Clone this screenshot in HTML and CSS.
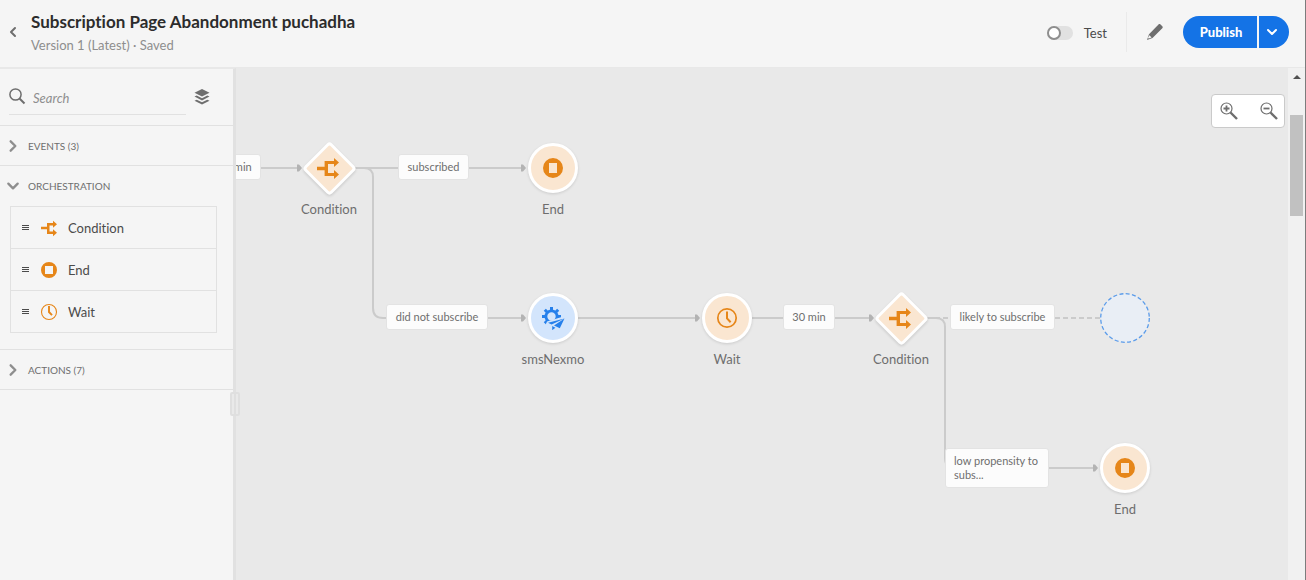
FILE: index.html
```html
<!DOCTYPE html>
<html lang="en">
<head>
<meta charset="utf-8">
<title>Subscription Page Abandonment puchadha</title>
<link rel="stylesheet" href="styles.css">
</head>
<body>
<svg class="defs" aria-hidden="true">
  <symbol id="i-condition" viewBox="-12 -12 24 24"><path d="M-12-1.300h7.600v-5.700h9.400v-3l5 4.500-5 4.500v-3h-6v9h6v-3l5 4.500-5 4.500v-3h-9.400v-5.700h-7.600z" fill="#e68619"/></symbol>
  <symbol id="i-end" viewBox="-12 -12 24 24"><path fill-rule="evenodd" d="M0-10a10 10 0 1 0 0 20a10 10 0 1 0 0-20zM-4-5h8V5h-8z" fill="#e68619"/></symbol>
  <symbol id="i-wait" viewBox="-12 -12 24 24"><circle r="9.200" fill="none" stroke="#e68619" stroke-width="1.700"/><path d="M-1-6.500h2V0l3.400 3.400-1.500 1.500L-1 .8z" fill="#e68619"/></symbol>
  <symbol id="i-chevron" viewBox="0 0 12 12"><path d="M4 2l4 4-4 4" fill="none" stroke="currentColor" stroke-width="2" stroke-linecap="round" stroke-linejoin="round"/></symbol>
</svg>
<header class="header">
  <button class="back" aria-label="Back"><svg width="12" height="12"><use href="#i-chevron"/></svg></button>
  <div class="heading">
    <h1>Subscription Page Abandonment puchadha</h1>
    <p>Version 1 (Latest) · Saved</p>
  </div>
  <label class="test"><input type="checkbox" class="switch"><span>Test</span></label>
  <button class="edit" aria-label="Edit"><svg width="18" height="18" viewBox="0 0 18 18"><path d="M12.500 1.400c.6-.6 1.400-.6 2 0l1.800 1.800c.6.6.6 1.400 0 2L6.500 15 1 17l2-5.800z" fill="#6e6e6e"/><path d="M3.400 12.300l2.200 2.200-2.900 1.100-.8-.7z" fill="#f5f5f5"/></svg></button>
  <div class="publish">
    <button class="publish-main">Publish</button>
    <button class="publish-more" aria-label="More publish options"><svg width="12" height="12"><use href="#i-chevron"/></svg></button>
  </div>
</header>
<main class="workspace">
  <aside class="sidebar">
    <div class="search-row">
      <label class="search">
        <svg width="18" height="18" viewBox="0 0 18 18" fill="none" stroke="#6e6e6e"><circle cx="6.500" cy="6.500" r="5.600" stroke-width="1.500"/><path d="M10.500 10.500l5 5" stroke-width="2"/></svg>
        <input type="text" placeholder="Search" aria-label="Search">
      </label>
      <button class="layers" aria-label="Filter layers"><svg width="16" height="18" viewBox="0 0 16 18" fill="#6e6e6e"><path d="M8 1l7.500 3.700L8 8.400.5 4.700z"/><path d="M.5 8.600l2.200-1L8 10.200l5.300-2.600 2.200 1L8 12.400z"/><path d="M.5 12.700l2.200-1L8 14.300l5.300-2.600 2.200 1L8 16.500z"/></svg></button>
    </div>
    <section class="group">
      <button class="group-title"><svg class="chev" width="14" height="14"><use href="#i-chevron"/></svg>EVENTS (3)</button>
    </section>
    <section class="group">
      <button class="group-title"><svg class="chev open" width="14" height="14"><use href="#i-chevron"/></svg>ORCHESTRATION</button>
      <ul class="palette">
        <li><svg class="grip" width="7" height="7" viewBox="0 0 7 7"><path d="M0 1.500h7M0 3.500h7M0 5.500h7" stroke="#4b4b4b"/></svg><svg width="18" height="20" viewBox="0 0 18 20"><path d="M1 8.800h6V5h6V2.700l4 3.500-4 3.500V7.500H9.500v6H13v-2.200l4 3.500-4 3.500V16H7v-4.800H1z" fill="#e68619"/></svg>Condition</li>
        <li><svg class="grip" width="7" height="7" viewBox="0 0 7 7"><path d="M0 1.500h7M0 3.500h7M0 5.500h7" stroke="#4b4b4b"/></svg><svg width="18" height="20" viewBox="0 0 18 20"><path fill-rule="evenodd" d="M9 2a8 8 0 1 0 0 16a8 8 0 1 0 0-16zM5 6h8v8H5z" fill="#e68619"/></svg>End</li>
        <li><svg class="grip" width="7" height="7" viewBox="0 0 7 7"><path d="M0 1.500h7M0 3.500h7M0 5.500h7" stroke="#4b4b4b"/></svg><svg width="18" height="20" viewBox="0 0 18 20" fill="none" stroke="#e68619"><circle cx="9" cy="10" r="7.500" stroke-width="1.100"/><path d="M9 4v6l3 3.200" stroke-width="1.900"/></svg>Wait</li>
      </ul>
    </section>
    <section class="group">
      <button class="group-title"><svg class="chev" width="14" height="14"><use href="#i-chevron"/></svg>ACTIONS (7)</button>
    </section>
    <div class="handle"></div>
  </aside>
  <div class="canvas">
    <svg class="edges" width="1052" height="512" fill="none" stroke="#cbcbcb" stroke-width="2">
      <path d="M0 100H62M119 100H288M119 100h9q9 0 9 9v131q0 10 10 10M147 250H288M342 250H462M516 250H636"/>
      <path d="M691 250H864" stroke-dasharray="5 3"/>
      <path d="M691 250h9q9 0 9 9v131q0 10 10 10M719 400H860"/>
      <g fill="#b3b3b3" stroke="none"><path d="M61 96.500h2l3 3.500-3 3.500h-2z"/><path d="M285 96.500h2l3 3.500-3 3.500h-2z"/><path d="M285 246.500h2l3 3.500-3 3.500h-2z"/><path d="M459 246.500h2l3 3.500-3 3.500h-2z"/><path d="M633 246.500h2l3 3.500-3 3.500h-2z"/><path d="M857 396.500h2l3 3.500-3 3.500h-2z"/></g>
    </svg>
    <span class="edge-label e-min">30 min</span>
    <span class="edge-label e-subscribed">subscribed</span>
    <span class="edge-label e-not">did not subscribe</span>
    <span class="edge-label e-30">30 min</span>
    <span class="edge-label e-likely">likely to subscribe</span>
    <span class="edge-label e-low">low propensity to subs...</span>
    <div class="node n-cond1"><i class="diamond"></i><svg width="24" height="24"><use href="#i-condition"/></svg><span>Condition</span></div>
    <div class="node n-end1"><i class="disc"></i><svg width="24" height="24"><use href="#i-end"/></svg><span>End</span></div>
    <div class="node n-sms"><i class="disc blue"></i><svg width="24" height="24" viewBox="-12 -12 24 24" fill="#2680eb"><g fill="none" stroke="#2680eb"><circle cx="-1.500" cy="-1.500" r="5.600" stroke-width="2.800"/><path d="M-1.500-11v3.500M-11-1.500h3.500M4.500-1.500h3.500M-8.200-8.200l2.500 2.500M5.200-8.200L2.700-5.700M-8.200 5.200l2.500-2.500" stroke-width="3"/></g><path d="M12-2L-6 3.500l-1 2.500 5 3v4h8l6-8z" fill="#d3e5fc"/><path d="M11.500.5L-5 4.800l3.600 1.800zM11.500.5L1 7.500l5.800 2.700zM-.8 8l3.200 1.700L-.8 12.200z"/></svg><span>smsNexmo</span></div>
    <div class="node n-wait"><i class="disc"></i><svg width="24" height="24"><use href="#i-wait"/></svg><span>Wait</span></div>
    <div class="node n-cond2"><i class="diamond"></i><svg width="24" height="24"><use href="#i-condition"/></svg><span>Condition</span></div>
    <div class="node n-empty"><svg class="drop" width="52" height="52" viewBox="-26 -26 52 52"><circle r="24.300" fill="#e9eef5" stroke="#5b9cea" stroke-width="1.300" stroke-dasharray="4 2.360"/></svg></div>
    <div class="node n-end2"><i class="disc"></i><svg width="24" height="24"><use href="#i-end"/></svg><span>End</span></div>
    <div class="zoom">
      <button aria-label="Zoom in"><svg width="18" height="18" viewBox="0 0 18 18" fill="none" stroke="#6e6e6e"><circle cx="6.500" cy="6.500" r="5.500" stroke-width="1.200"/><path d="M3.500 6.500h6M6.500 3.500v6" stroke-width="1.800"/><path d="M10.500 10.500l6.500 6.500" stroke-width="2.400"/></svg></button>
      <button aria-label="Zoom out"><svg width="18" height="18" viewBox="0 0 18 18" fill="none" stroke="#6e6e6e"><circle cx="6.500" cy="6.500" r="5.500" stroke-width="1.200"/><path d="M3.500 6.500h6" stroke-width="1.800"/><path d="M10.500 10.500l6.500 6.500" stroke-width="2.400"/></svg></button>
    </div>
  </div>
  <div class="scrollbar"><i class="arrow"></i><i class="thumb"></i></div>
</main>
</body>
</html>
```
FILE: styles.css
```css
*, *::before { box-sizing: border-box; }
body {
  margin: 0;
  height: 100vh;
  display: flex;
  flex-direction: column;
  overflow: hidden;
  border-right: 1px solid #7c7c7c;
  background: #f5f5f5;
  color: #4b4b4b;
  font: 13px/18px Lato, "Open Sans", sans-serif;
  font-variant-ligatures: none;
}
button { border: 0; padding: 0; background: none; font: inherit; color: inherit; display: flex; align-items: center; }
.defs { position: absolute; width: 0; height: 0; }
.header {
  flex: none;
  display: flex;
  align-items: center;
  height: 68px;
  padding-right: 16px;
  padding-bottom: 4px;
  border-bottom: 1px solid #e8e8e8;
}
.back { width: 31px; padding-left: 7px; color: #6e6e6e; }
.back svg { transform: rotate(180deg); }
.heading { flex: 1; }
h1 { margin: 0; padding-top: 2px; font-size: 17px; line-height: 24px; font-weight: 700; color: #2c2c2c; }
.heading p { margin: 0; padding-top: 1px; font-size: 13px; line-height: 20px; color: #8e8e8e; }
.test { display: flex; align-items: center; gap: 11px; height: 40px; padding: 2px 19px 0 0; border-right: 1px solid #eaeaea; }
.switch { appearance: none; margin: 0; width: 26px; height: 14px; border-radius: 7px; background: #e1e1e1; }
.switch::before { content: ""; display: block; width: 14px; height: 14px; border: 2px solid #8e8e8e; border-radius: 50%; background: #fff; }
.edit { padding: 0 19px; }
.publish { display: flex; gap: 2px; }
.publish button { height: 32px; background: #1473e6; color: #fff; justify-content: center; }
.publish .publish-main { width: 74px; padding-left: 2px; border-radius: 16px 0 0 16px; font-weight: 900; }
.publish .publish-more { width: 30px; padding-right: 4px; border-radius: 0 16px 16px 0; }
.publish-more svg { transform: rotate(90deg); }

.workspace { flex: 1; display: flex; min-height: 0; }
.sidebar { position: relative; flex: none; width: 236px; border-right: 3px solid #e1e1e1; border-top: 1px solid #e8e8e8; }
.search-row { display: flex; align-items: flex-start; height: 57px; padding: 10px 9px 0; border-bottom: 1px solid #e1e1e1; }
.search { display: flex; align-items: center; gap: 6px; width: 177px; height: 36px; border-bottom: 1px solid #e1e1e1; }
.search svg { flex: none; }
.search input { width: 100%; border: 0; padding: 2px 0 0; outline: 0; background: none; font: italic 13px/18px Lato, sans-serif; }
.search input::placeholder { color: #8e8e8e; }
.layers { margin: 9px 0 0 8px; }
.group { border-bottom: 1px solid #e1e1e1; }
.group-title { width: 100%; height: 39px; padding-left: 6px; gap: 8px; font-size: 10px; color: #6e6e6e; }
.chev { color: #8e8e8e; }
.chev.open { transform: rotate(90deg); }
.palette { list-style: none; margin: 1px 16px 16px 10px; padding: 0; border: 1px solid #e1e1e1; }
.palette li { display: flex; align-items: center; height: 42px; padding-left: 11px; border-bottom: 1px solid #e1e1e1; }
.palette li:last-child { border-bottom: 0; height: 41px; }
.palette .grip { margin-right: 11px; }
.palette .grip + svg { margin-right: 10px; }
.handle { position: absolute; z-index: 2; right: -7px; top: 323px; width: 10px; height: 24px; border: 2px solid #dfdfdf; border-radius: 2px; background: linear-gradient(90deg, #e9e9e9 2px, #dfdfdf 2px 4px, #e9e9e9 4px); }

.canvas { position: relative; flex: 1; overflow: hidden; background: #e9e9e9; }
.edges { position: absolute; left: 0; top: 0; }
.edge-label {
  position: absolute;
  display: flex;
  align-items: center;
  justify-content: center;
  height: 26px;
  border: 1px solid #e3e3e3;
  border-radius: 3px;
  background: #fcfcfc;
  color: #6e6e6e;
  font-size: 11px;
  line-height: 14px;
  white-space: nowrap;
}
.e-min { left: -27px; top: 86px; width: 52px; }
.e-subscribed { left: 162px; top: 86px; width: 71px; }
.e-not { left: 150px; top: 236px; width: 102px; }
.e-30 { left: 547px; top: 236px; width: 52px; }
.e-likely { left: 714px; top: 236px; width: 105px; }
.e-low { left: 709px; top: 380px; width: 104px; height: 40px; padding: 0 4px 0 8px; white-space: normal; }
.node { position: absolute; width: 100px; height: 80px; margin: -26px 0 0 -50px; display: grid; grid-template-rows: 52px 28px; justify-items: center; align-items: center; color: #6e6e6e; }
.node > i, .node > svg { grid-area: 1 / 1; }
.node > svg { position: relative; }
.node > span { grid-area: 2 / 1; padding-top: 2px; }
.disc { width: 50px; height: 50px; border: 3px solid #fff; border-radius: 50%; background: #fae6d1; box-shadow: 0 1px 3px #0002; }
.disc.blue { background: #d3e5fc; }
.diamond { width: 39px; height: 39px; border: 3px solid #fff; border-radius: 4px; background: #fae6d1; transform: rotate(45deg); box-shadow: 1px 1px 3px #0002; }
.n-cond1 { left: 93px; top: 100px; }
.n-end1 { left: 317px; top: 100px; }
.n-sms { left: 317px; top: 250px; }
.n-wait { left: 491px; top: 250px; }
.n-cond2 { left: 665px; top: 250px; }
.n-empty { left: 889px; top: 250px; }
.n-end2 { left: 889px; top: 400px; }
.zoom { position: absolute; right: 3px; top: 26px; display: flex; gap: 22px; width: 74px; height: 34px; padding-left: 8px; border: 1px solid #cacaca; border-radius: 4px; background: #fff; }

.scrollbar { flex: none; display: flex; flex-direction: column; align-items: center; width: 17px; padding-top: 7px; background: #f1f1f1; }
.arrow { border: 4px solid transparent; border-top: 0; border-bottom-color: #505050; }
.thumb { width: 13px; height: 101px; margin-top: 36px; background: #c1c1c1; }
```
